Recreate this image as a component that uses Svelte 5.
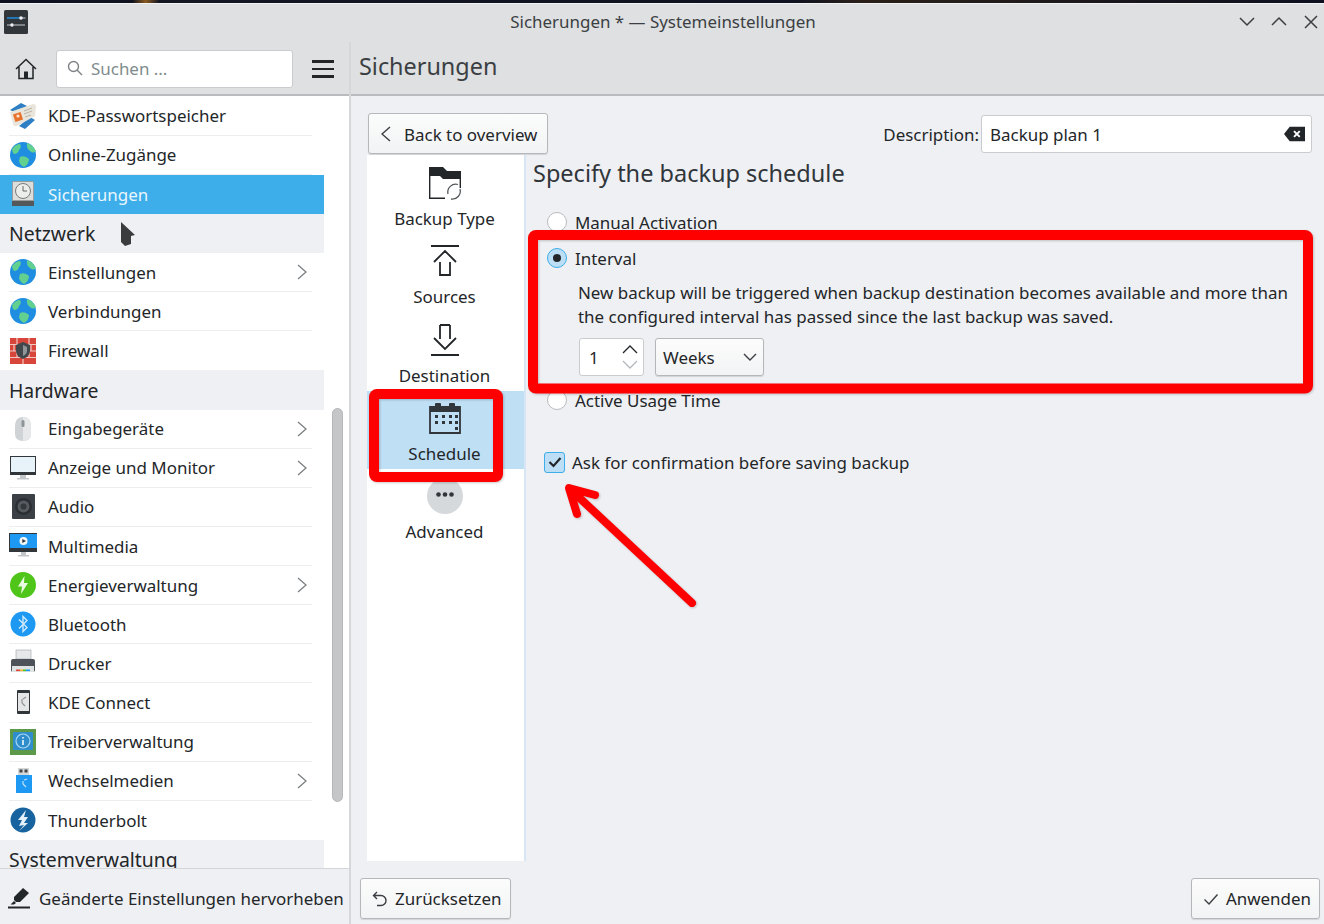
<script>
  const items = [
    { label: "KDE-Passwortspeicher", icon: "wallet" },
    { label: "Online-Zugänge", icon: "globe" },
    { label: "Sicherungen", icon: "backup", active: true },
    { head: "Netzwerk" },
    { label: "Einstellungen", icon: "globe", more: true },
    { label: "Verbindungen", icon: "globe" },
    { label: "Firewall", icon: "firewall", last: true },
    { head: "Hardware" },
    { label: "Eingabegeräte", icon: "mouse", more: true },
    { label: "Anzeige und Monitor", icon: "monitor", more: true },
    { label: "Audio", icon: "audio" },
    { label: "Multimedia", icon: "media" },
    { label: "Energieverwaltung", icon: "power", more: true },
    { label: "Bluetooth", icon: "bluetooth" },
    { label: "Drucker", icon: "printer" },
    { label: "KDE Connect", icon: "phone" },
    { label: "Treiberverwaltung", icon: "driver" },
    { label: "Wechselmedien", icon: "usb", more: true },
    { label: "Thunderbolt", icon: "thunder", last: true },
    { head: "Systemverwaltung" },
  ];

  const pages = [
    { label: "Backup Type", icon: "folder" },
    { label: "Sources", icon: "up" },
    { label: "Destination", icon: "down" },
    { label: "Schedule", icon: "calendar", active: true },
    { label: "Advanced", icon: "dots" },
  ];
</script>

{#snippet appIcon(name)}
  <svg class="app-icon" viewBox="0 0 28 28" aria-hidden="true">
    {#if name === "wallet"}
      <path d="M1 8 L12 1 L18 4 L9 12z" fill="#2f7fc4" />
      <path d="M16 27 L26 18 L21 15 L10 24z" fill="#2f7fc4" />
      <path d="M1 10 L24 2 Q27 2 27 5 L26 14 L8 24 Q5 25 4 22z" fill="#e9e5da" />
      <rect x="5" y="11" width="8" height="8" transform="rotate(-18 9 15)" fill="#e8722c" />
      <circle cx="9" cy="14" r="1.6" fill="#fbe3d0" />
      <path d="M15 9 L23 6 M15 12 L23 9 M16 15 L22 13" stroke="#b9b4a8" stroke-width="1" />
    {:else if name === "globe"}
      <circle cx="14" cy="14" r="13" fill="#1f8ee0" />
      <path d="M3 8 Q7 3 11 3 Q13 6 10 9 Q9 13 5 13 Q3 11 3 8z M18 2 Q24 4 27 10 Q24 13 21 10 Q17 7 18 2z M11 16 Q16 14 20 18 Q20 23 15 26 Q11 24 10 20z" fill="#62d08f" />
    {:else if name === "backup"}
      <rect x="3" y="1" width="22" height="25" rx="1.5" fill="#9a9d9c" />
      <rect x="4" y="2" width="20" height="18" fill="#dcdedb" />
      <circle cx="14" cy="11" r="7.5" fill="#eceeeb" stroke="#777a79" stroke-width="1" />
      <path d="M14 6 V11 H18" fill="none" stroke="#666" stroke-width="1" />
      <rect x="3" y="21" width="22" height="5" fill="#55585a" />
    {:else if name === "firewall"}
      <rect x="1" y="1" width="26" height="26" fill="#d8453a" />
      <path d="M1 7.5 H27 M1 14 H27 M1 20.5 H27 M8 1 V7.5 M20 1 V7.5 M5 7.5 V14 M22 7.5 V14 M8 14 V20.5 M20 14 V20.5 M14 20.5 V27" stroke="#f0c9c2" stroke-width="1.2" />
      <path d="M14 5 L21 8 V14 Q21 19 14 22 Q7 19 7 14 V8z" fill="#41474b" />
      <path d="M14 8 L18 10 V14 Q18 17 14 19z" fill="#8f9598" />
    {:else if name === "mouse"}
      <path d="M14 2 Q22 2 22 11 V19 Q22 26 14 26 Q6 26 6 19 V11 Q6 2 14 2z" fill="#cfd3d5" />
      <path d="M14 2 Q22 2 22 11 V19 Q22 26 14 26z" fill="#e6e8e9" />
      <rect x="12.5" y="5" width="3" height="7" rx="1.5" fill="#8c9498" />
    {:else if name === "monitor"}
      <rect x="1" y="2" width="26" height="19" fill="#31363b" />
      <rect x="2" y="3" width="24" height="15" fill="#e8f3f9" />
      <rect x="11" y="21" width="6" height="3" fill="#c4c7c9" />
      <rect x="8" y="24" width="12" height="1.5" fill="#c4c7c9" />
    {:else if name === "audio"}
      <rect x="3" y="1" width="23" height="25" rx="1" fill="#3a4046" />
      <circle cx="14.5" cy="13.5" r="8.5" fill="#2a2e32" />
      <circle cx="14.5" cy="13.5" r="6" fill="#555b60" />
      <circle cx="14.5" cy="13.5" r="3" fill="#33383c" />
    {:else if name === "media"}
      <rect x="0" y="1" width="29" height="19" fill="#31363b" />
      <rect x="1" y="2" width="27" height="14" fill="#1d99f3" />
      <circle cx="14.5" cy="9" r="4" fill="#f4f6f7" />
      <path d="M13.3 7 L17 9 L13.3 11z" fill="#31363b" />
      <rect x="12" y="20" width="5" height="3" fill="#c4c7c9" />
      <rect x="9" y="23" width="11" height="1.5" fill="#c4c7c9" />
    {:else if name === "power"}
      <circle cx="14" cy="14" r="13" fill="#4fc51a" />
      <path d="M15.5 5 L9 15.5 H13 L12 23 L19 12 H15z" fill="#e9fbe0" />
    {:else if name === "bluetooth"}
      <circle cx="14" cy="14" r="12.5" fill="#1d99f3" />
      <path d="M10 9.5 L18 17.5 L14 21.5 V6.5 L18 10.5 L10 18.5" fill="none" stroke="#cfe9fc" stroke-width="1.4" />
    {:else if name === "printer"}
      <rect x="7" y="1" width="15" height="9" fill="#e6e8e9" stroke="#9ea2a5" stroke-width=".6" />
      <rect x="2" y="10" width="24" height="13" rx="2" fill="#4c5257" />
      <rect x="3" y="17" width="22" height="6" fill="#dfe2e3" />
      <rect x="7" y="20.5" width="4" height="1.6" fill="#e0453a" />
      <rect x="11" y="20.5" width="3" height="1.6" fill="#f5b92c" />
      <rect x="14" y="20.5" width="3" height="1.6" fill="#4fc51a" />
      <rect x="17" y="20.5" width="4" height="1.6" fill="#1d99f3" />
    {:else if name === "phone"}
      <rect x="8" y="1" width="13" height="24" rx="1" fill="#31363b" />
      <rect x="9" y="4" width="11" height="18" fill="#e3e5e6" />
      <path d="M14 10 L17 8 M13 14 L16 17 M13 14 L13 10" stroke="#8f9496" stroke-width="1.2" fill="none" />
    {:else if name === "driver"}
      <rect x="1" y="1" width="26" height="26" fill="#5c9a4a" />
      <rect x="4" y="4" width="20" height="18" rx="1" fill="#2f8dcb" />
      <circle cx="14" cy="13" r="7" fill="none" stroke="#a9d8f3" stroke-width="1.2" />
      <path d="M14 9 V10.5 M14 12 V17" stroke="#d8eefb" stroke-width="1.8" />
    {:else if name === "usb"}
      <rect x="9" y="1" width="11" height="7" fill="#d4d6d7" />
      <rect x="10.5" y="2.5" width="3" height="3" fill="#444" />
      <rect x="15.5" y="2.5" width="3" height="3" fill="#444" />
      <rect x="7" y="8" width="16" height="18" fill="#1d99f3" />
      <path d="M15 13 L18 12 M14 17 L17 20 M14 17 V14" stroke="#bfe2fb" stroke-width="1.2" fill="none" />
    {:else if name === "thunder"}
      <circle cx="14" cy="14" r="12.5" fill="#17639f" />
      <path d="M17 4 L9 14 H13 L10 20 L15 19 L10 25 L19 17 H15 L19 11 H15z" fill="#e5f1fa" />
    {/if}
  </svg>
{/snippet}

{#snippet pageIcon(name)}
  <svg class="page-icon" viewBox="0 0 34 34" aria-hidden="true">
    {#if name === "folder"}
      <path d="M1 1 H15 L19 5 H33 V13 H15 L12 10 H1z" fill="#232629" />
      <path d="M1.7 10 V32.3 H17 M32.3 13 V22" fill="none" stroke="#232629" stroke-width="1.4" />
      <path d="M20 28 A8 8 0 0 1 30 18.5 M32 23 A8 8 0 0 1 23 33" fill="none" stroke="#55595c" stroke-width="1.3" />
    {:else if name === "up"}
      <path d="M3 2 H31 M6 18 L17 7 L28 18 M12 18 V31 H22 V18" fill="none" stroke="#232629" stroke-width="1.8" />
    {:else if name === "down"}
      <path d="M12 2 V16 M22 2 V16 M12 2 H22 M6 15 L17 26 L28 15 M3 32 H31" fill="none" stroke="#232629" stroke-width="1.8" />
    {:else if name === "calendar"}
      <path d="M2 6 H32 V32 H2z" fill="none" stroke="#31363b" stroke-width="1.8" />
      <rect x="2" y="5" width="30" height="6" fill="#31363b" />
      <rect x="7" y="2" width="6" height="4" rx="1" fill="#31363b" />
      <rect x="21" y="2" width="6" height="4" rx="1" fill="#31363b" />
      <path d="M7 14 h3v3h-3z M14 14 h3v3h-3z M21 14 h3v3h-3z M27 14 h3v3h-3z M7 20 h3v3h-3z M14 20 h3v3h-3z M21 20 h3v3h-3z M27 20 h3v3h-3z M27 26 h3v3h-3z" fill="#31363b" />
    {:else if name === "dots"}
      <circle cx="17" cy="17" r="18" fill="#d6d9dc" />
      <circle cx="10.500" cy="15.500" r="2.300" fill="#31363b" />
      <circle cx="17" cy="15.500" r="2.300" fill="#31363b" />
      <circle cx="23.500" cy="15.500" r="2.300" fill="#31363b" />
    {/if}
  </svg>
{/snippet}

<div class="screen">
  <div class="wallpaper"></div>
  <header class="titlebar">
    <svg class="win-icon" viewBox="0 0 24 24" aria-hidden="true">
      <rect width="24" height="24" rx="1.500" fill="#31363b" />
      <path d="M3 8 H19" stroke="#1d99f3" stroke-width="1.300" />
      <path d="M19 8 H21.500 M3 15 H7 M10 15 H21" stroke="#c9ced2" stroke-width="1" />
      <circle cx="17" cy="8" r="1.800" fill="#eff0f1" />
      <circle cx="8" cy="15" r="1.800" fill="#eff0f1" />
    </svg>
    <span class="win-title">Sicherungen * — Systemeinstellungen</span>
    <div class="win-btns">
      <svg viewBox="0 0 16 16" aria-hidden="true"><path d="M1 4 L8 11 L15 4" /></svg>
      <svg viewBox="0 0 16 16" aria-hidden="true"><path d="M1 11 L8 4 L15 11" /></svg>
      <svg viewBox="0 0 16 16" aria-hidden="true"><path d="M2 2 L14 14 M14 2 L2 14" /></svg>
    </div>
  </header>

  <div class="window">
    <aside class="sidebar">
      <div class="side-tools">
        <svg class="home" viewBox="0 0 22 22" aria-hidden="true">
          <path d="M1 11 L11 1.500 L21 11 M4 9 V20.500 H18 V9" fill="none" stroke="#232629" stroke-width="1.500" />
          <path d="M9 20 V13.500 H13 V20z" fill="#232629" />
        </svg>
        <div class="search">
          <svg viewBox="0 0 16 16" aria-hidden="true">
            <circle cx="6.500" cy="6.500" r="5" />
            <path d="M10 10 L15 15" />
          </svg>
          <span>Suchen ...</span>
        </div>
        <div class="burger"><i></i><i></i><i></i></div>
      </div>

      <div class="side-body">
        <nav class="list">
          {#each items as item}
            {#if item.head}
              <div class="group">{item.head}</div>
            {:else}
              <div class="row" class:active={item.active} class:last={item.last}>
                <span class="row-icon">{@render appIcon(item.icon)}</span>
                <span class="row-label">{item.label}</span>
                {#if item.more}
                  <svg class="more" viewBox="0 0 10 16" aria-hidden="true"><path d="M1 1 L9 8 L1 15" /></svg>
                {/if}
              </div>
            {/if}
          {/each}
        </nav>
        <div class="track"><div class="thumb"></div></div>
      </div>

      <div class="side-foot">
        <svg viewBox="0 0 22 22" aria-hidden="true">
          <path d="M6 10 L15 1 L21 6 L12 15 L8 15 L6 13z M6 14 L8 16 L6 17.500 L2.500 17.500z" fill="#232629" />
          <rect x="0" y="19.500" width="22" height="2" fill="#232629" />
        </svg>
        <span>Geänderte Einstellungen hervorheben</span>
      </div>
    </aside>

    <main class="main">
      <div class="main-head">Sicherungen</div>
      <div class="main-body">
        <div class="top-row">
          <button class="btn back">
            <svg viewBox="0 0 10 16" aria-hidden="true"><path d="M9 1 L1 8 L9 15" /></svg>
            Back to overview
          </button>
          <div class="descr">
            <span>Description:</span>
            <div class="descr-input">
              <span>Backup plan 1</span>
              <svg viewBox="0 0 22 16" aria-hidden="true">
                <path d="M0 8 L6 0.500 H22 V15.500 H6z" fill="#232629" />
                <path d="M10.500 5 L16.500 11 M16.500 5 L10.500 11" stroke="#fff" stroke-width="2" />
              </svg>
            </div>
          </div>
        </div>

        <div class="columns">
          <div class="pages">
            {#each pages as page}
              <div class="page" class:active={page.active}>
                {@render pageIcon(page.icon)}
                <span>{page.label}</span>
              </div>
            {/each}
          </div>

          <section class="form">
            <h1>Specify the backup schedule</h1>
            <div class="opt manual"><span class="radio"></span>Manual Activation</div>
            <div class="opt"><span class="radio on"><i></i></span>Interval</div>
            <p class="hint">New backup will be triggered when backup destination becomes available and more than the configured interval has passed since the last backup was saved.</p>
            <div class="interval">
              <div class="spin">
                <span>1</span>
                <svg viewBox="0 0 16 30" aria-hidden="true">
                  <path d="M1 11 L8 4 L15 11" stroke="#232629" />
                  <path d="M1 19 L8 26 L15 19" stroke="#b4b7ba" />
                </svg>
              </div>
              <div class="combo">
                <span>Weeks</span>
                <svg viewBox="0 0 14 8" aria-hidden="true"><path d="M1 1 L7 7 L13 1" /></svg>
              </div>
            </div>
            <div class="opt active-usage"><span class="radio"></span>Active Usage Time</div>
            <div class="check-row">
              <span class="check">
                <svg viewBox="0 0 16 16" aria-hidden="true"><path d="M2.500 8 L6.500 12 L13.500 4" /></svg>
              </span>
              Ask for confirmation before saving backup
            </div>
          </section>
        </div>
      </div>

      <div class="main-foot">
        <button class="btn">
          <svg viewBox="0 0 16 16" aria-hidden="true"><path d="M5 1 L1.500 4.500 L5 8 M2 4.500 H9 A5 5 0 0 1 9 14.500 H5" /></svg>
          Zurücksetzen
        </button>
        <button class="btn">
          <svg viewBox="0 0 16 16" aria-hidden="true"><path d="M1.500 8.500 L6 13 L14.500 3.500" /></svg>
          Anwenden
        </button>
      </div>
    </main>
  </div>

  <!-- hand drawn annotations on top of the screenshot -->
  <svg class="marks" viewBox="0 0 1324 924" aria-hidden="true">
    <rect x="533" y="235" width="775" height="153.500" rx="3" />
    <rect x="374" y="394" width="124" height="83" rx="3" />
    <path d="M692 603 L571 490 M595 495 L569 488 L577 514" stroke-width="8" />
  </svg>
  <svg class="cursor" viewBox="0 0 16 24" aria-hidden="true">
    <path d="M1 0 L15 13 L11 14 L11 22 L5 24 L1 20z" fill="#3a3c3e" />
  </svg>
</div>

<style>
  :global(body) {
    margin: 0;
    overflow: hidden;
  }
  .screen {
    position: relative;
    width: 1324px;
    height: 924px;
    overflow: hidden;
    display: flex;
    flex-direction: column;
    background: #eff0f3;
    color: #232629;
    font-family: "Noto Sans", sans-serif;
    font-size: 16.950px;
  }
  .wallpaper {
    height: 3px;
    flex: none;
    background: linear-gradient(90deg, #0d1020 0, #10131f 10%, #8a5a20 11%, #141722 12%, #0f1220 60%, #2a2018 65%, #0d1020 100%);
    border-bottom: 1px solid #f2f3f4;
  }
  .titlebar {
    height: 38px;
    flex: none;
    display: flex;
    align-items: center;
    background: #dee0e2;
    position: relative;
  }
  .win-icon {
    width: 24px;
    height: 24px;
    margin-left: 4px;
    margin-top: -2px;
  }
  .win-title {
    position: absolute;
    left: 2px;
    right: 0;
    top: 6px;
    text-align: center;
    font-size: 16.950px;
    color: #3b3f43;
  }
  .win-btns {
    margin-left: auto;
    margin-right: 5px;
    display: flex;
    gap: 16px;
    margin-top: -3px;
  }
  .win-btns svg {
    width: 16px;
    height: 16px;
  }
  .win-btns path {
    fill: none;
    stroke: #3b3f43;
    stroke-width: 1.5;
  }

  .window {
    flex: 1;
    display: flex;
    min-height: 0;
  }
  .sidebar {
    width: 349px;
    flex: none;
    display: flex;
    flex-direction: column;
    border-right: 2px solid #d5d7da;
  }
  .side-tools {
    height: 54px;
    flex: none;
    box-sizing: border-box;
    padding-top: 2px;
    display: flex;
    align-items: center;
    background: #dee0e2;
    border-bottom: 2px solid #b9bbbe;
  }
  .home {
    width: 22px;
    height: 22px;
    margin-left: 15px;
  }
  .search {
    width: 237px;
    height: 38px;
    box-sizing: border-box;
    margin-left: 19px;
    padding: 0 0 2px 10px;
    display: flex;
    align-items: center;
    gap: 8px;
    background: #fff;
    border: 1px solid #c9cbce;
    border-radius: 3px;
    color: #7f8c8d;
  }
  .search svg {
    width: 16px;
    height: 16px;
  }
  .search svg * {
    fill: none;
    stroke: #7e8386;
    stroke-width: 1.4;
  }
  .burger {
    margin-left: 19px;
    width: 22px;
    display: flex;
    flex-direction: column;
    gap: 5px;
  }
  .burger i {
    height: 2.500px;
    background: #232629;
  }
  .side-body {
    flex: 1;
    min-height: 0;
    display: flex;
    overflow: hidden;
    background: #fff;
  }
  .list {
    width: 324px;
    flex: none;
    padding-top: 0.600px;
    background: #fff;
  }
  .row {
    height: 39.140px;
    box-sizing: border-box;
    margin: 0 12px 0 9px;
    display: flex;
    align-items: center;
    border-bottom: 1px solid #eceded;
  }
  .row.last {
    border-bottom: 0;
  }
  .row.active {
    margin: 0;
    padding: 0 12px 0 9px;
    background: #3daee9;
    color: #eaf6fd;
    border-bottom: 0;
  }
  .row-icon {
    width: 28px;
    height: 28px;
    flex: none;
    margin-right: 11px;
  }
  .app-icon {
    display: block;
    width: 28px;
    height: 28px;
  }
  .row-label {
    flex: 1;
    white-space: nowrap;
  }
  .more {
    width: 10px;
    height: 16px;
    margin-right: 5px;
  }
  .more path {
    fill: none;
    stroke: #7c8083;
    stroke-width: 1.3;
  }
  .group {
    height: 39.140px;
    box-sizing: border-box;
    padding-left: 9px;
    display: flex;
    align-items: center;
    background: #eff0f3;
    font-size: 19.400px;
    white-space: nowrap;
  }
  .track {
    flex: 1;
    padding-top: 312px;
  }
  .thumb {
    width: 11px;
    height: 394px;
    margin-left: 8px;
    box-sizing: border-box;
    background: #c4c6c7;
    border: 1px solid #b5b7b9;
    border-radius: 6px;
  }
  .side-foot {
    height: 56px;
    flex: none;
    box-sizing: border-box;
    display: flex;
    align-items: center;
    gap: 9px;
    padding: 3px 0 0 8px;
    background: #eff0f3;
    border-top: 1px solid #d3d5d8;
    white-space: nowrap;
  }
  .side-foot svg {
    width: 22px;
    height: 22px;
    flex: none;
  }

  .main {
    flex: 1;
    min-width: 0;
    display: flex;
    flex-direction: column;
  }
  .main-head {
    height: 54px;
    flex: none;
    box-sizing: border-box;
    display: flex;
    align-items: center;
    padding: 0 0 4px 8px;
    background: #dee0e2;
    border-bottom: 2px solid #b9bbbe;
    font-size: 23.400px;
    color: #3b3f43;
  }
  .main-body {
    flex: 1;
    min-height: 0;
    display: flex;
    flex-direction: column;
    padding: 17px 12px 0 16px;
  }
  .top-row {
    height: 41px;
    flex: none;
    margin-bottom: 1px;
    display: flex;
    align-items: center;
    justify-content: space-between;
  }
  .btn {
    height: 41px;
    box-sizing: border-box;
    display: inline-flex;
    align-items: center;
    gap: 7px;
    padding: 0 8px 0 11px;
    background: linear-gradient(#fcfcfc, #f2f3f4);
    border: 1px solid #b5b7ba;
    border-radius: 3px;
    box-shadow: 0 1px 1px rgba(0, 0, 0, 0.12);
    color: #232629;
    font: inherit;
    white-space: nowrap;
  }
  .btn svg {
    width: 16px;
    height: 16px;
    flex: none;
  }
  .btn svg path {
    fill: none;
    stroke: #3b3f43;
    stroke-width: 1.4;
  }
  .back {
    margin-left: 1px;
    width: 180px;
    gap: 13px;
    padding-left: 12px;
    padding-top: 1px;
  }
  .back svg {
    width: 10px;
  }
  .descr {
    display: flex;
    align-items: center;
    gap: 2px;
  }
  .descr > span,
  .descr-input > span {
    padding-top: 2px;
  }
  .descr-input {
    width: 331px;
    height: 38px;
    box-sizing: border-box;
    display: flex;
    align-items: center;
    justify-content: space-between;
    padding: 0 6px 0 8px;
    background: #fff;
    border: 1px solid #c9cbce;
    border-radius: 3px;
  }
  .descr-input svg {
    width: 21px;
    height: 16px;
  }
  .columns {
    flex: 1;
    min-height: 0;
    display: flex;
  }
  .pages {
    width: 159px;
    flex: none;
    box-sizing: border-box;
    padding-top: 1px;
    background: #fff;
    border-right: 2px solid #d6e6f4;
  }
  .page {
    height: 78.300px;
    box-sizing: border-box;
    padding: 10px 2px 0 0;
    display: flex;
    flex-direction: column;
    align-items: center;
    gap: 7px;
    white-space: nowrap;
  }
  .page.active {
    background: #bfdff5;
  }
  .page-icon {
    width: 34px;
    height: 34px;
    flex: none;
    overflow: visible;
  }
  .form {
    flex: 1;
    min-width: 0;
    padding-left: 7px;
  }
  h1 {
    margin: 0 0 13px;
    height: 36px;
    line-height: 36px;
    font-size: 23.500px;
    font-weight: 400;
    color: #31363b;
  }
  .opt {
    height: 36px;
    display: flex;
    align-items: center;
    gap: 8px;
    padding-left: 14px;
  }
  .radio {
    width: 20px;
    height: 20px;
    box-sizing: border-box;
    flex: none;
    display: flex;
    align-items: center;
    justify-content: center;
    background: #fff;
    border: 1px solid #b9bbbe;
    border-radius: 50%;
  }
  .radio.on {
    background: #bcdff5;
    border-color: #3daee9;
  }
  .radio i {
    width: 8px;
    height: 8px;
    background: #232629;
    border-radius: 50%;
  }
  .hint {
    margin: 5px 0 0;
    padding-left: 45px;
    padding-right: 16px;
    line-height: 24px;
  }
  .interval {
    margin: 9px 0 0 46px;
    display: flex;
    gap: 11px;
  }
  .spin {
    width: 65px;
    height: 38px;
    box-sizing: border-box;
    display: flex;
    align-items: center;
    justify-content: space-between;
    padding: 0 5px 0 9px;
    background: #fff;
    border: 1px solid #c9cbce;
    border-radius: 3px;
  }
  .spin svg {
    width: 16px;
    height: 30px;
  }
  .spin path {
    fill: none;
    stroke-width: 1.3;
  }
  .combo {
    width: 109px;
    height: 38px;
    box-sizing: border-box;
    display: flex;
    align-items: center;
    justify-content: space-between;
    padding: 0 6px 0 7px;
    background: linear-gradient(#fcfcfc, #f2f3f4);
    border: 1px solid #b5b7ba;
    border-radius: 3px;
    box-shadow: 0 1px 1px rgba(0, 0, 0, 0.12);
  }
  .combo svg {
    width: 14px;
    height: 8px;
  }
  .combo path {
    fill: none;
    stroke: #3b3f43;
    stroke-width: 1.4;
  }
  .active-usage {
    margin-top: 6px;
  }
  .check-row {
    margin: 26px 0 0 11px;
    height: 36px;
    display: flex;
    align-items: center;
    gap: 7px;
  }
  .check {
    width: 21px;
    height: 21px;
    box-sizing: border-box;
    display: flex;
    align-items: center;
    justify-content: center;
    background: #bcdff5;
    border: 1px solid #3daee9;
    border-radius: 3px;
  }
  .check svg {
    width: 16px;
    height: 16px;
  }
  .check path {
    fill: none;
    stroke: #232629;
    stroke-width: 2.200;
  }
  .main-foot {
    height: 63px;
    flex: none;
    box-sizing: border-box;
    display: flex;
    align-items: flex-start;
    justify-content: space-between;
    padding: 17px 4px 0 9px;
  }

  .marks {
    position: absolute;
    left: 0;
    top: 0;
    width: 1324px;
    height: 924px;
    pointer-events: none;
    filter: drop-shadow(1px 1px 1px rgba(0, 0, 0, 0.2));
  }
  .marks rect {
    fill: none;
    stroke: #fe0000;
    stroke-width: 10;
  }
  .marks path {
    fill: none;
    stroke: #fe0000;
    stroke-linecap: round;
    stroke-linejoin: round;
  }
  .cursor {
    position: absolute;
    left: 120px;
    top: 222px;
    width: 16px;
    height: 24px;
  }
</style>
